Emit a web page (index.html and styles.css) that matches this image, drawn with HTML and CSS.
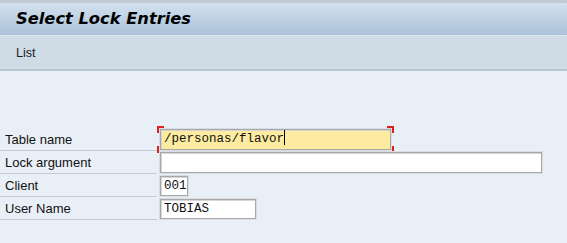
FILE: index.html
```html
<!DOCTYPE html>
<html>
<head>
<meta charset="utf-8">
<link rel="stylesheet" href="styles.css">
</head>
<body>
<div class="titlebar"><h1 class="title">Select Lock Entries</h1></div>
<div class="toolbar"><span class="tool">List</span></div>
<div class="form">
  <div class="row">
    <label class="label">Table name</label>
    <div class="focus-wrap">
      <span class="corner tl"></span><span class="corner bl"></span><span class="corner tr"></span><span class="corner br"></span>
      <div class="field field-table focused">/personas/flavor<span class="caret"></span></div>
    </div>
  </div>
  <div class="row">
    <label class="label">Lock argument</label>
    <div class="field field-arg"></div>
  </div>
  <div class="row">
    <label class="label">Client</label>
    <div class="field field-client">001</div>
  </div>
  <div class="row">
    <label class="label">User Name</label>
    <div class="field field-user">TOBIAS</div>
  </div>
</div>
</body>
</html>
```
FILE: styles.css
```css
html, body {
  margin: 0;
  padding: 0;
  background: #e9eff6;
  width: 567px;
  height: 243px;
  overflow: hidden;
}
body {
  font-family: "Liberation Sans", Arial, sans-serif;
  color: #000;
}
.titlebar {
  height: 32px;
  border-top: 3px solid #c5cbd6;
  background: linear-gradient(#d4e1ee, #aac2da);
  border-bottom: 1px solid #dbe5ee;
  display: flex;
  align-items: center;
  padding-left: 16px;
}
.title {
  margin: 0;
  font-family: "DejaVu Sans", Verdana, sans-serif;
  font-weight: bold;
  font-style: italic;
  font-size: 16.3px;
  color: #000;
  padding-bottom: 1px;
}
.toolbar {
  height: 33px;
  background: #cfdce6;
  border-bottom: 2px solid #b6c6d4;
  display: flex;
  align-items: center;
  padding-left: 16px;
}
.tool {
  font-size: 12.5px;
  color: #222;
}
.form {
  padding-top: 57px;
  display: flex;
  flex-direction: column;
}
.row {
  display: flex;
  align-items: center;
  height: 23px;
  position: relative;
}
.label {
  width: 157px;
  padding-left: 5px;
  font-size: 13px;
  color: #111;
  align-self: stretch;
  display: flex;
  align-items: center;
  border-bottom: 1px solid #c4ccd4;
  box-sizing: border-box;
  margin-right: 3px;
}
.field {
  box-sizing: border-box;
  height: 21px;
  background: #fff;
  border: 1px solid #a8a8a8;
  box-shadow: inset 1px 1px 0 #d6d6d6, 0 0 0 1px #dadde2;
  font-family: "Liberation Mono", "Courier New", monospace;
  font-size: 12.5px;
  line-height: 19px;
  padding-left: 3px;
  color: #111;
  white-space: nowrap;
}
.field-table { width: 231px; }
.field-arg { width: 382px; }
.field-client { width: 28px; height: 20px; }
.field-user { width: 96px; height: 20px; }
.focused {
  background: #fdeca0;
}
.caret {
  display: inline-block;
  width: 1px;
  height: 15px;
  background: #000;
  vertical-align: -3px;
}
.focus-wrap {
  position: relative;
}
.corner {
  position: absolute;
  width: 5px;
  height: 5px;
  border: 0 solid #e0201c;
}
.tl { left: -3px; top: -3px; border-top-width: 2px; border-left-width: 2px; }
.bl { left: -3px; bottom: -3px; border-bottom-width: 2px; border-left-width: 2px; }
.tr { right: -3px; top: -3px; border-top-width: 2px; border-right-width: 2px; }
.br { right: -3px; bottom: -3px; border-bottom-width: 2px; border-right-width: 2px; }
```
